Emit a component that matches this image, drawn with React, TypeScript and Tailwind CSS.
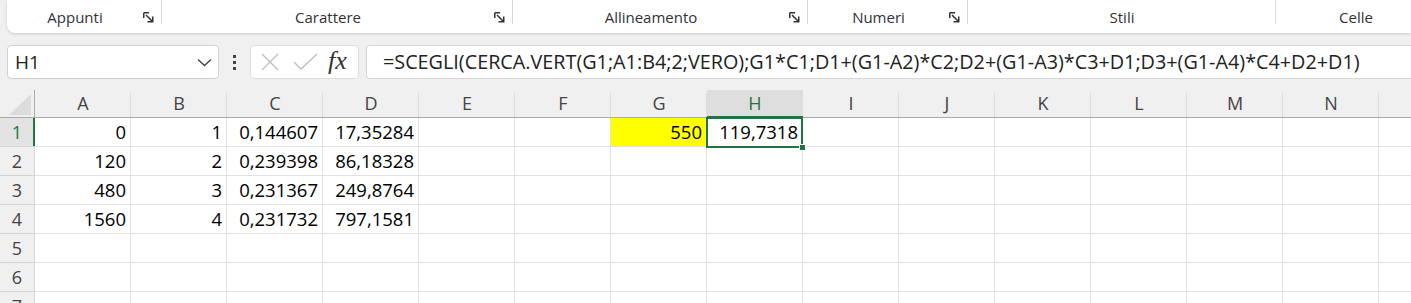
import React from "react";

const COLS = ["A", "B", "C", "D", "E", "F", "G", "H", "I", "J", "K", "L", "M", "N"];

const DATA: Record<string, string>[] = [
  { A: "0", B: "1", C: "0,144607", D: "17,35284", G: "550", H: "119,7318" },
  { A: "120", B: "2", C: "0,239398", D: "86,18328" },
  { A: "480", B: "3", C: "0,231367", D: "249,8764" },
  { A: "1560", B: "4", C: "0,231732", D: "797,1581" },
  {},
  {},
  {},
];

const FORMULA =
  "=SCEGLI(CERCA.VERT(G1;A1:B4;2;VERO);G1*C1;D1+(G1-A2)*C2;D2+(G1-A3)*C3+D1;D3+(G1-A4)*C4+D2+D1)";

function Launcher() {
  return (
    <svg width="11" height="11" viewBox="0 0 11 11" className="shrink-0 text-[#333]">
      <path d="M0.75 0.75H6M0.75 0.75V6" stroke="currentColor" strokeWidth="1.5" fill="none" />
      <path d="M3 3L9.5 9.5M9.75 4.5V9.75H4.5" stroke="currentColor" strokeWidth="1.5" fill="none" />
    </svg>
  );
}

function RibbonGroup({
  label,
  width,
  launcher = true,
  last = false,
}: {
  label: string;
  width: string;
  launcher?: boolean;
  last?: boolean;
}) {
  return (
    <div className={`${width} h-full flex items-start pt-[8px] shrink-0 relative`}>
      <div className="flex-1 text-center text-[15px] leading-[19px] text-[#333]">{label}</div>
      {launcher && (
        <div className="w-[19px] pt-[4px] flex justify-start">
          <Launcher />
        </div>
      )}
      {!last && <div className="absolute right-0 top-0 h-[24px] w-px bg-[#dadada]" />}
    </div>
  );
}

function Ribbon() {
  return (
    <div className="ml-[7px] h-[33px] bg-white rounded-bl-[8px] shadow-[0_1px_3px_rgba(0,0,0,0.15)] flex">
      <RibbonGroup label="Appunti" width="w-[155px]" />
      <RibbonGroup label="Carattere" width="w-[351px]" />
      <RibbonGroup label="Allineamento" width="w-[295px]" />
      <RibbonGroup label="Numeri" width="w-[160px]" />
      <RibbonGroup label="Stili" width="w-[308px]" launcher={false} />
      <RibbonGroup label="Celle" width="w-[160px]" launcher={false} last />
    </div>
  );
}

function FormulaBar() {
  return (
    <div className="mt-[12px] h-[34px] flex pl-[7px]">
      <div className="w-[212px] h-full bg-white border border-[#d1d1d1] rounded-[4px] flex items-center pl-[7px] pr-[6px]">
        <span className="flex-1 text-[19px] text-[#222]">H1</span>
        <svg width="15" height="9" viewBox="0 0 15 9">
          <path d="M1 1.5L7.5 7.5L14 1.5" stroke="#444" strokeWidth="1.4" fill="none" />
        </svg>
      </div>
      <div className="w-[31px] flex flex-col items-center justify-center gap-[3px]">
        <span className="w-[3px] h-[3px] bg-[#444]" />
        <span className="w-[3px] h-[3px] bg-[#444]" />
        <span className="w-[3px] h-[3px] bg-[#444]" />
      </div>
      <div className="w-[109px] h-full bg-white border border-[#dedede] rounded-[4px] flex items-center pl-[9px] gap-[13px]">
        <svg width="20" height="20" viewBox="0 0 20 20">
          <path d="M2 2L18 18M18 2L2 18" stroke="#bdbdbd" strokeWidth="1.3" fill="none" />
        </svg>
        <svg width="25" height="18" viewBox="0 0 25 18">
          <path d="M1 9L8 16L24 1" stroke="#bdbdbd" strokeWidth="1.3" fill="none" />
        </svg>
        <span className="font-['Liberation_Serif',serif] italic text-[26px] leading-none text-[#333] -ml-[3px] -mt-[2px]">
          fx
        </span>
      </div>
      <div className="ml-[7px] flex-1 h-full bg-white border border-[#d6d6d6] border-r-0 rounded-l-[4px] flex items-center pl-[16px] overflow-hidden">
        <span className="text-[19.8px] text-[#222] whitespace-nowrap">{FORMULA}</span>
      </div>
    </div>
  );
}

function HeaderRow() {
  return (
    <div className="flex h-[28px] bg-[#f0f0f0] border-b border-[#ababab]">
      <div className="w-[35px] shrink-0 border-r border-[#ababab] relative flex items-end justify-end pr-[3px] pb-[2px]">
        <svg width="22" height="21" viewBox="0 0 22 21">
          <path d="M22 0V21H0Z" fill="#dcdcdc" />
        </svg>
      </div>
      {COLS.map((c) => {
        const active = c === "H";
        return (
          <div
            key={c}
            className={`w-[96px] shrink-0 flex items-center justify-center text-[18px] relative ${
              active ? "bg-[#dedede] text-[#217346]" : "text-[#444]"
            }`}
          >
            {c}
            <div className="absolute right-0 top-[3px] bottom-0 w-px bg-[#dcdcdc]" />
            {active && <div className="absolute left-0 right-0 -bottom-[1px] h-[2px] bg-[#217346]" />}
          </div>
        );
      })}
      <div className="flex-1" />
    </div>
  );
}

function DataRow({ n, data }: { n: number; data: Record<string, string> }) {
  const rowActive = n === 1;
  return (
    <div className="flex h-[29px]">
      <div
        className={`w-[35px] shrink-0 border-r border-b border-[#d4d4d4] flex items-center justify-center text-[18px] relative ${
          rowActive ? "bg-[#e3e3e3] text-[#217346]" : "bg-[#f0f0f0] text-[#444]"
        }`}
      >
        {n}
        {rowActive && <div className="absolute -right-[1px] top-0 bottom-0 w-[2px] bg-[#217346]" />}
      </div>
      {COLS.map((c) => {
        const value = data[c];
        const yellow = n === 1 && c === "G";
        const selected = n === 1 && c === "H";
        return (
          <div
            key={c}
            className={`w-[96px] shrink-0 border-r border-b border-[#e1e1e1] flex items-center justify-end pr-[4px] text-[18.5px] text-black relative ${
              yellow ? "bg-[#ffff00]" : "bg-white"
            } ${selected ? "z-10" : ""}`}
          >
            {value}
            {selected && (
              <>
                <div className="absolute -left-[1px] -top-[1px] -right-[1px] -bottom-[2px] border-2 border-[#217346]" />
                <div className="absolute -right-[4px] -bottom-[5px] w-[7px] h-[7px] bg-[#217346] border border-white" />
              </>
            )}
          </div>
        );
      })}
      <div className="flex-1 bg-white border-b border-[#e1e1e1]" />
    </div>
  );
}

export default function App() {
  return (
    <div className="w-[1411px] h-[303px] overflow-hidden bg-[#f0f0f0] font-['Open_Sans','Noto_Sans',sans-serif]">
      <Ribbon />
      <FormulaBar />
      <div className="mt-[11px]">
        <HeaderRow />
        {DATA.map((d, i) => (
          <DataRow key={i} n={i + 1} data={d} />
        ))}
      </div>
    </div>
  );
}
